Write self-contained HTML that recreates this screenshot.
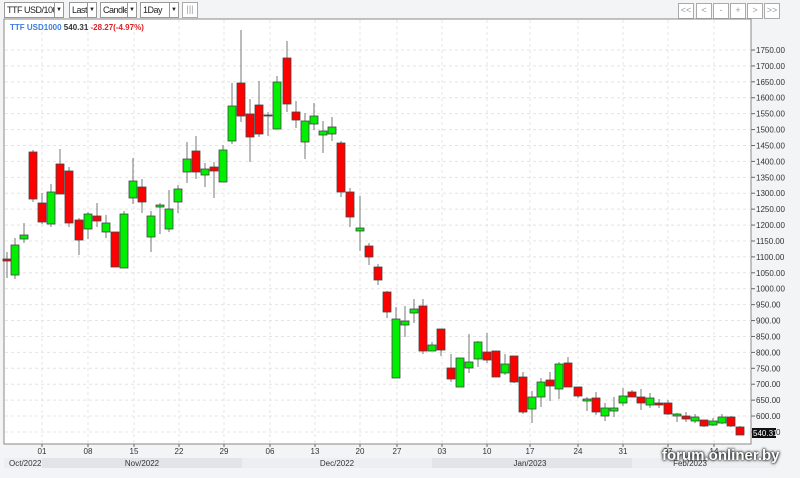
<!DOCTYPE html>
<html><head><meta charset="utf-8"><style>
body{margin:0;width:800px;height:478px;background:#f3f4f6;font-family:"Liberation Sans",sans-serif;overflow:hidden;position:relative}
.sel{position:absolute;top:2px;height:16px;border:1px solid #999;background:#fff;font-size:9px;letter-spacing:-0.5px;line-height:14px;padding-left:2px;box-sizing:border-box;color:#222;white-space:nowrap;overflow:hidden}
.sel span{position:absolute;right:0;top:0;width:8px;height:14px;border-left:1px solid #999;font-size:6px;text-align:center;background:#fff;letter-spacing:0}
.btn{position:absolute;top:3px;width:14px;height:14px;border:1px solid #aaa;background:#fff;font-size:9px;line-height:13px;text-align:center;color:#999}
.wm{position:absolute;left:662px;top:447px;font:bold 15px "Liberation Sans",sans-serif;color:#fff;text-shadow:0 0 3px #000,0 0 2px #000}
</style></head><body>
<div class="sel" style="left:4px;width:60px">TTF USD/100<span>▼</span></div>
<div class="sel" style="left:69px;width:28px">Last<span>▼</span></div>
<div class="sel" style="left:100px;width:37px">Candle<span>▼</span></div>
<div class="sel" style="left:140px;width:39px">1Day<span>▼</span></div>
<div class="btn" style="left:182px;top:2px;height:14px">|||</div>
<div class="btn" style="left:678px">&lt;&lt;</div>
<div class="btn" style="left:696px">&lt;</div>
<div class="btn" style="left:713px">-</div>
<div class="btn" style="left:730px">+</div>
<div class="btn" style="left:747px">&gt;</div>
<div class="btn" style="left:764px">&gt;&gt;</div>
<svg id="s" width="800" height="478" style="position:absolute;left:0;top:0" xmlns="http://www.w3.org/2000/svg"></svg>
<div class="wm">forum.onliner.by</div>
<script>
var s=document.getElementById('s'),h='';
h+='<rect x="4" y="19" width="747" height="425" fill="#fff" stroke="#888"/>';
h+='<rect x="4" y="458" width="38" height="10" fill="#eceef1"/><rect x="42" y="458" width="200" height="10" fill="#e3e4e7"/><rect x="242" y="458" width="190" height="10" fill="#eceef1"/><rect x="432" y="458" width="200" height="10" fill="#e3e4e7"/><rect x="632" y="458" width="144" height="10" fill="#eceef1"/>';
for(var v=1750;v>=550;v-=50){var y=50+(1750-v)*0.3183;h+='<line x1="5" x2="751" y1="'+y+'" y2="'+y+'" stroke="#e4e4e4" stroke-dasharray="3,3"/><line x1="751" x2="755" y1="'+y+'" y2="'+y+'" stroke="#666"/><text x="756" y="'+(y+3)+'" font-size="8" fill="#333">'+v+'.00</text>';}
var d=[[42,'01'],[88,'08'],[134,'15'],[179,'22'],[224,'29'],[270,'06'],[315,'13'],[360,'20'],[397,'27'],[442,'03'],[487,'10'],[530,'17'],[578,'24'],[623,'31'],[668,'07'],[714,'14']];
d.forEach(function(a){h+='<line x1="'+a[0]+'" x2="'+a[0]+'" y1="20" y2="443" stroke="#e4e4e4" stroke-dasharray="3,3"/><line x1="'+a[0]+'" x2="'+a[0]+'" y1="444" y2="447" stroke="#666"/><text x="'+a[0]+'" y="454" font-size="8" fill="#333" text-anchor="middle">'+a[1]+'</text>';});
h+='<text x="9" y="466" font-size="8" fill="#333">Oct/2022</text><text x="142" y="466" font-size="8" fill="#333" text-anchor="middle">Nov/2022</text><text x="337" y="466" font-size="8" fill="#333" text-anchor="middle">Dec/2022</text><text x="530" y="466" font-size="8" fill="#333" text-anchor="middle">Jan/2023</text><text x="690" y="466" font-size="8" fill="#333" text-anchor="middle">Feb/2023</text>';
var c=[[7,252,259,261,278,0],[15,238,245,275,279,1],[24,223,235,239,243,1],[33,150,152,199,202,0],[42,193,203,222,224,0],[51,184,192,224,227,1],[60,149,164,194,194,0],[69,167,171,223,227,0],[79,218,220,240,255,0],[88,212,214,229,239,1],[97,203,216,221,227,0],[106,215,223,232,238,1],[115,232,232,267,267,0],[124,211,214,268,268,1],[133,158,181,198,204,1],[142,179,187,202,213,0],[151,211,216,237,252,1],[160,203,205,207,234,1],[169,190,209,229,232,1],[178,185,189,202,213,1],[187,142,159,172,183,1],[196,136,151,172,179,0],[205,163,169,175,187,1],[214,162,167,171,198,0],[223,145,150,182,182,1],[232,83,106,141,144,1],[241,30,83,116,122,0],[250,99,114,137,162,0],[259,81,105,134,137,0],[268,112,115,116,136,0],[277,76,82,129,129,1],[287,41,58,104,112,0],[296,101,112,120,128,0],[305,113,121,142,159,1],[314,103,116,124,130,1],[323,121,131,135,153,1],[332,117,127,134,141,1],[341,141,143,192,197,0],[350,188,192,217,227,0],[360,196,228,231,251,1],[369,243,246,257,265,0],[378,264,267,280,285,0],[387,291,292,312,318,0],[396,307,319,378,378,1],[405,306,321,325,337,1],[414,299,309,313,323,1],[423,299,306,351,354,0],[432,342,345,351,351,1],[441,329,329,350,356,0],[451,354,368,379,382,0],[460,358,358,387,387,1],[469,334,362,368,373,1],[478,341,342,359,367,1],[487,333,352,360,363,0],[496,351,351,377,377,0],[505,354,364,373,375,1],[514,356,356,382,383,0],[523,372,377,412,414,0],[532,391,397,409,423,1],[541,378,382,397,407,1],[550,372,380,386,401,0],[559,362,364,389,399,1],[568,357,363,387,387,0],[578,387,387,396,398,0],[587,397,399,401,411,1],[596,392,398,412,415,0],[605,403,408,416,421,1],[614,397,408,411,417,1],[623,388,396,403,406,1],[632,390,392,397,397,0],[641,389,397,403,410,0],[650,393,398,405,408,1],[659,399,403,405,408,0],[668,400,403,414,415,0],[677,413,414,416,422,1],[686,412,416,419,422,0],[695,414,417,421,423,1],[704,420,420,426,427,0],[713,418,421,425,426,1],[722,414,417,423,424,1],[731,416,417,426,427,0],[740,426,427,435,435,0]];
c.forEach(function(k){h+='<line x1="'+k[0]+'" x2="'+k[0]+'" y1="'+k[1]+'" y2="'+k[4]+'" stroke="#777"/><rect x="'+(k[0]-4)+'" y="'+k[2]+'" width="8" height="'+Math.max(1,k[3]-k[2])+'" fill="'+(k[5]?'#00ee00':'#ff0000')+'" stroke="#444" stroke-width="0.8"/>';});
h+='<rect x="752" y="428" width="24" height="10" fill="#111"/><text x="753" y="436" font-size="8" fill="#fff">540.31</text>';
h+='<text x="10" y="30" font-size="8" font-weight="bold"><tspan fill="#3a7ee0">TTF USD1000 </tspan><tspan fill="#333">540.31 </tspan><tspan fill="#e02020">-28.27(-4.97%)</tspan></text>';
s.innerHTML=h;
</script>
</body></html>
